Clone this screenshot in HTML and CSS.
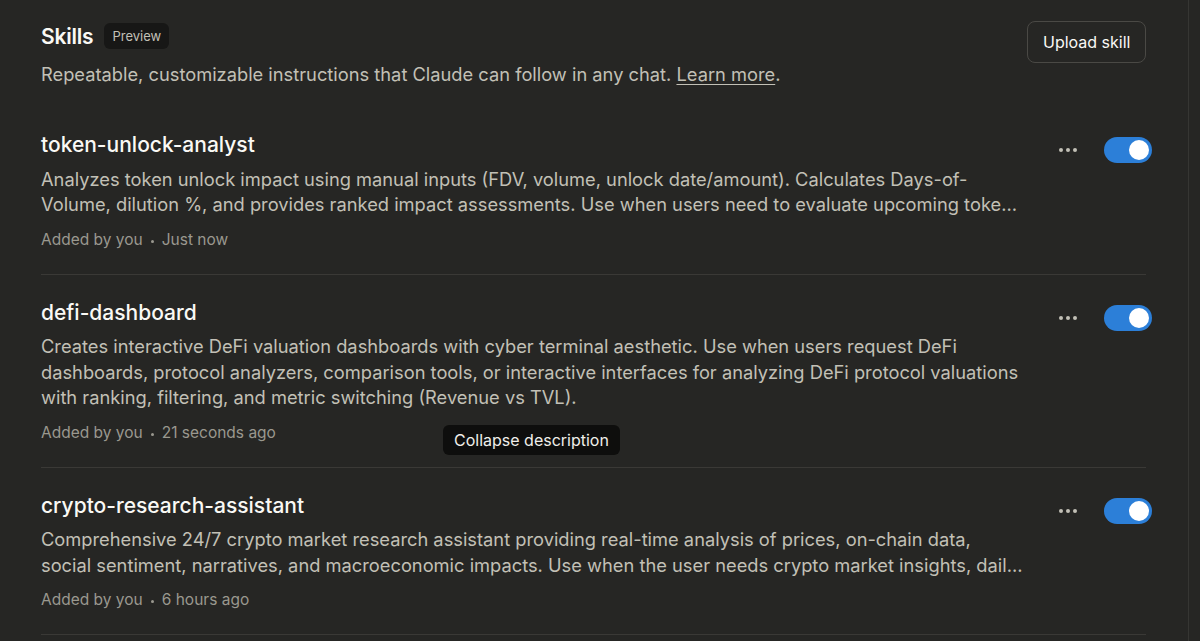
FILE: index.html
```html
<!DOCTYPE html>
<html lang="en">
<head>
<meta charset="utf-8">
<title>Skills</title>
<link rel="stylesheet" href="styles.css">
</head>
<body>
<div class="layout">
  <main class="panel">
    <header class="header">
      <div class="header-text">
        <div class="title-row">
          <h1 class="page-title">Skills</h1>
          <span class="badge">Preview</span>
        </div>
        <p class="subtitle">Repeatable, customizable instructions that Claude can follow in any chat. <a class="link" href="#">Learn more</a>.</p>
      </div>
      <button class="upload-btn">Upload skill</button>
    </header>

    <ul class="skill-list">
      <li class="skill">
        <div class="skill-body">
          <h2 class="skill-name">token-unlock-analyst</h2>
          <p class="skill-desc clamp">Analyzes token unlock impact using manual inputs (FDV, volume, unlock date/amount). Calculates Days-of-Volume, dilution %, and provides ranked impact assessments. Use when users need to evaluate upcoming token unlocks and their potential market impact.</p>
          <div class="skill-meta"><span>Added by you</span><span class="sep"></span><span>Just now</span></div>
        </div>
        <div class="skill-controls">
          <button class="more" aria-label="More options"><span></span><span></span><span></span></button>
          <span class="toggle on"><span class="knob"></span></span>
        </div>
      </li>

      <li class="skill">
        <div class="skill-body">
          <h2 class="skill-name">defi-dashboard</h2>
          <p class="skill-desc">Creates interactive DeFi valuation dashboards with cyber terminal aesthetic. Use when users request DeFi dashboards, protocol analyzers, comparison tools, or interactive interfaces for analyzing DeFi protocol valuations with ranking, filtering, and metric switching (Revenue vs TVL).</p>
          <div class="skill-meta"><span>Added by you</span><span class="sep"></span><span>21 seconds ago</span></div>
        </div>
        <div class="skill-controls">
          <button class="more" aria-label="More options"><span></span><span></span><span></span></button>
          <span class="toggle on"><span class="knob"></span></span>
        </div>
        <div class="tooltip">Collapse description</div>
      </li>

      <li class="skill">
        <div class="skill-body">
          <h2 class="skill-name">crypto-research-assistant</h2>
          <p class="skill-desc clamp">Comprehensive 24/7 crypto market research assistant providing real-time analysis of prices, on-chain data, social sentiment, narratives, and macroeconomic impacts. Use when the user needs crypto market insights, daily briefings, or deep research.</p>
          <div class="skill-meta"><span>Added by you</span><span class="sep"></span><span>6 hours ago</span></div>
        </div>
        <div class="skill-controls">
          <button class="more" aria-label="More options"><span></span><span></span><span></span></button>
          <span class="toggle on"><span class="knob"></span></span>
        </div>
      </li>
    </ul>
  </main>
  <aside class="side"></aside>
</div>
</body>
</html>
```

FILE: styles.css
```css
* { box-sizing: border-box; }

html, body {
  margin: 0;
  padding: 0;
  background: #262624;
  height: 100%;
  overflow: hidden;
}

body {
  font-family: Inter, "Noto Sans", sans-serif;
  color: #c2c0b6;
}

.layout {
  display: flex;
  height: 641px;
}

.panel {
  width: 1189px;
  border-right: 1px solid #363633;
  padding: 21px 42px 0 41px;
}

.side {
  flex: 1;
}

.header {
  display: flex;
  justify-content: space-between;
  align-items: flex-start;
}

.title-row {
  display: flex;
  align-items: center;
  gap: 11px;
  height: 30px;
}

.page-title {
  margin: 0;
  font-size: 21px;
  font-weight: 600;
  color: #faf9f5;
  letter-spacing: -0.2px;
}

.badge {
  background: #171716;
  color: #c2c0b6;
  font-size: 13px;
  padding: 4px 8px;
  border-radius: 6px;
  line-height: 18px;
}

.subtitle {
  margin: 10px 0 0;
  font-size: 18.3px;
  line-height: 26px;
  color: #c2c0b6;
}

.link {
  color: #c2c0b6;
  text-decoration: underline;
  text-underline-offset: 3px;
}

.upload-btn {
  font-family: inherit;
  font-size: 16px;
  color: #faf9f5;
  background: #262624;
  border: 1px solid #4a4945;
  border-radius: 8px;
  padding: 0 15px;
  height: 42px;
  width: 119px;
  white-space: nowrap;
}

.skill-list {
  list-style: none;
  margin: 44px 0 0;
  padding: 0;
}

.skill {
  position: relative;
  display: flex;
  justify-content: space-between;
  align-items: flex-start;
  border-bottom: 1px solid #3a3936;
  padding: 24px 0 23px;
}

.skill:first-child {
  padding-top: 0;
}

.skill-body {
  width: 982px;
}

.skill-name {
  margin: 0;
  font-size: 21px;
  line-height: 28px;
  font-weight: 500;
  color: #faf9f5;
}

.skill-desc {
  margin: 7.5px 0 0;
  font-size: 18.3px;
  line-height: 25.5px;
  color: #c2c0b6;
}

.skill-desc.clamp {
  display: -webkit-box;
  -webkit-line-clamp: 2;
  -webkit-box-orient: vertical;
  overflow: hidden;
}

.skill-meta {
  margin-top: 11px;
  display: flex;
  align-items: center;
  font-size: 15.5px;
  line-height: 22px;
  color: #9a988f;
}

.sep {
  width: 3px;
  height: 3px;
  border-radius: 50%;
  background: #9a988f;
  margin: 3px 8px 0;
}

.skill-controls {
  display: flex;
  align-items: center;
  gap: 27px;
  margin-top: 6px;
  margin-right: -6px;
}

.more {
  display: flex;
  gap: 3px;
  background: none;
  border: 0;
  padding: 0;
}

.more span {
  width: 4px;
  height: 4px;
  border-radius: 50%;
  background: #c2c0b6;
}

.toggle {
  width: 48px;
  height: 26px;
  border-radius: 13px;
  background: #2c7fd8;
  display: flex;
  align-items: center;
  justify-content: flex-end;
  padding: 0 3px;
}

.knob {
  width: 20px;
  height: 20px;
  border-radius: 50%;
  background: #ffffff;
}

.tooltip {
  position: absolute;
  left: 402px;
  bottom: 12px;
  background: #0e0e0d;
  color: #f0efea;
  font-size: 16px;
  line-height: 20px;
  padding: 5px 11px;
  border-radius: 6px;
}
```
